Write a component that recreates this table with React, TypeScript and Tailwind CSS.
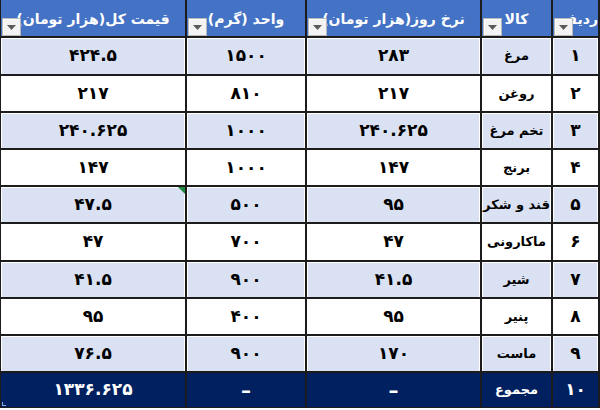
import React from "react";

type Row = [string, string, string, string, string];

const rows: Row[] = [
  ["۱", "مرغ", "۲۸۳", "۱۵۰۰", "۴۲۴.۵"],
  ["۲", "روغن", "۲۱۷", "۸۱۰", "۲۱۷"],
  ["۳", "تخم مرغ", "۲۴۰.۶۲۵", "۱۰۰۰", "۲۴۰.۶۲۵"],
  ["۴", "برنج", "۱۴۷", "۱۰۰۰", "۱۴۷"],
  ["۵", "قند و شکر", "۹۵", "۵۰۰", "۴۷.۵"],
  ["۶", "ماکارونی", "۴۷", "۷۰۰", "۴۷"],
  ["۷", "شیر", "۴۱.۵", "۹۰۰", "۴۱.۵"],
  ["۸", "پنیر", "۹۵", "۴۰۰", "۹۵"],
  ["۹", "ماست", "۱۷۰", "۹۰۰", "۷۶.۵"],
];

const headers = ["ردیف", "کالا", "نرخ روز(هزار تومان)", "واحد (گرم)", "قیمت کل(هزار تومان)"];

function FilterButton() {
  return (
    <div className="absolute left-[1px] bottom-0 w-[19px] h-[18px] bg-[#f3f3f3] border border-[#b8b8b8] shadow-[inset_1px_1px_0_#ffffff] flex items-center justify-center">
      <svg width="9" height="5" viewBox="0 0 9 5">
        <polygon points="0,0 9,0 4.5,5" fill="#5a5a5a" />
      </svg>
    </div>
  );
}

export default function App() {
  return (
    <div className="w-[600px] h-[410px] bg-white overflow-hidden">
      <div
        dir="rtl"
        className="w-[600px] grid grid-cols-[45px_69px_173px_118px_184px] grid-rows-[36px_36px_35px_35px_35px_35px_36px_35px_35px_35px_34px] gap-[2px] bg-[#1c1c1c] border-l border-r-2 border-b border-[#1c1c1c] font-['DejaVu_Sans',sans-serif] font-bold"
      >
        {headers.map((h, i) => (
          <div
            key={h}
            className={`relative overflow-hidden bg-[#4472c4] text-white text-[14px] flex items-center pt-[3px] whitespace-nowrap ${
              i === 0 ? "justify-start" : "justify-center"
            }`}
          >
            <span>{h}</span>
            <FilterButton />
          </div>
        ))}
        {rows.map((r, ri) => {
          const light = ri % 2 === 0;
          return r.map((c, ci) => (
            <div
              key={`${ri}-${ci}`}
              className={`relative flex items-center justify-center text-black whitespace-nowrap ${
                ci === 1 ? "text-[13px]" : "text-[17px]"
              } ${light ? "bg-[#d9e1f2] shadow-[inset_1px_1px_0_#ffffff,inset_-1px_0_0_#ffffff]" : "bg-white"}`}
            >
              {c}
              {ri === 4 && ci === 4 && (
                <svg className="absolute top-0 right-0" width="7" height="7" viewBox="0 0 7 7">
                  <polygon points="0,0 7,0 7,7" fill="#1f8a3c" />
                </svg>
              )}
            </div>
          ));
        })}
        {["۱۰", "مجموع", "–", "–", "۱۳۳۶.۶۲۵"].map((c, ci) => (
          <div
            key={`t-${ci}`}
            className={`relative flex items-center justify-center bg-[#002060] text-white whitespace-nowrap ${
              ci === 1 ? "text-[13px]" : ci === 2 || ci === 3 ? "text-[20px]" : "text-[17px]"
            }`}
          >
            {c}
            {ci === 4 && (
              <div className="absolute left-[1px] bottom-[1px] w-[4px] h-[4px] border-l border-b border-[#8ea9db]" />
            )}
          </div>
        ))}
      </div>
    </div>
  );
}
